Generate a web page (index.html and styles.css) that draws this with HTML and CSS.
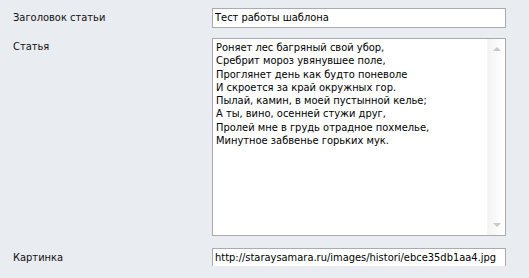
FILE: index.html
```html
<!DOCTYPE html>
<html>
<head>
  <meta charset="utf-8">
  <link rel="stylesheet" href="styles.css">
</head>

<body>
  <div class="form">
    <!-- Article title -->
    <div class="label label-line">Заголовок статьи</div>
    <div class="field">Тест работы шаблона</div>

    <!-- Article body -->
    <div class="label label-top">Статья</div>
    <div class="memo">
      <div class="memo-text">
        Роняет лес багряный свой убор,<br>
        Сребрит мороз увянувшее поле,<br>
        Проглянет день как будто поневоле<br>
        И скроется за край окружных гор.<br>
        Пылай, камин, в моей пустынной келье;<br>
        А ты, вино, осенней стужи друг,<br>
        Пролей мне в грудь отрадное похмелье,<br>
        Минутное забвенье горьких мук.
      </div>
      <div class="scrollbar">
        <span class="arrow arrow-up"></span>
        <span class="arrow arrow-down"></span>
      </div>
    </div>

    <!-- Picture url -->
    <div class="label label-line last-row">Картинка</div>
    <div class="field last-row">http://staraysamara.ru/images/histori/ebce35db1aa4.jpg</div>
  </div>
</body>
</html>
```

FILE: styles.css
```css
body {
  margin: 0;
  background-color: #e9ecf0;
  font-family: "DejaVu Sans Condensed", "DejaVu Sans", sans-serif;
  font-size: 11px;
  color: #000;
}

.form {
  display: grid;
  grid-template-columns: 199px 294px;
  grid-template-rows: 20px 198px 20px;
  row-gap: 10px;
  padding: 8px 0 0 13px;
}

.last-row {
  margin-top: 2px;
}

.label {
  color: #111;
}

.label-line {
  line-height: 20px;
}

.label-top {
  padding-top: 2px;
  line-height: 13px;
}

.field {
  box-sizing: border-box;
  height: 20px;
  border: 1px solid #a9abaf;
  background-color: #fff;
  padding: 0 2px;
  line-height: 18px;
  white-space: nowrap;
  overflow: hidden;
}

.memo {
  box-sizing: border-box;
  display: flex;
  border: 1px solid #a9abaf;
  background-color: #fff;
}

.memo-text {
  flex: 1;
  padding: 2px 3px;
  line-height: 13.3px;
}

.scrollbar {
  position: relative;
  width: 17px;
  background: linear-gradient(to right, #f3f3f3, #fbfbfb 60%, #fff);
  border-left: 1px solid #f6f6f6;
}

.arrow {
  position: absolute;
  left: 5px;
  width: 0;
  height: 0;
  border-left: 4px solid transparent;
  border-right: 4px solid transparent;
}

.arrow-up {
  top: 8px;
  border-bottom: 4px solid #c8c8c8;
}

.arrow-down {
  bottom: 8px;
  border-top: 4px solid #c8c8c8;
}
```
